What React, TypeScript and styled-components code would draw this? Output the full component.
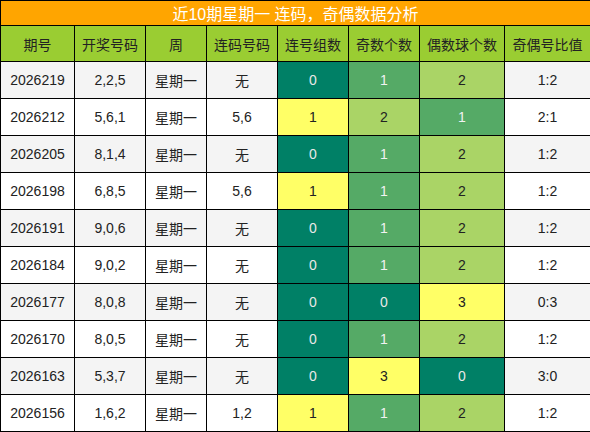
import React from "react";
import styled, { createGlobalStyle } from "styled-components";

const Global = createGlobalStyle`
  html, body { margin: 0; padding: 0; background: #fff; }
  body { font-family: "Liberation Sans", Arial, "Noto Sans CJK SC", sans-serif; }
`;

const Table = styled.table`
  width: 590px;
  border-collapse: collapse;
  table-layout: fixed;
  font-family: "Liberation Sans", Arial, "Noto Sans CJK SC", sans-serif;
`;

const TitleCell = styled.th`
  height: 24px;
  padding: 0;
  background: #ffa500;
  color: #fff;
  font-size: 16px;
  font-weight: normal;
  text-align: center;
  border: 1px solid #000;
`;

const HeadCell = styled.th`
  height: 35px;
  padding: 0;
  background: #9acd32;
  color: #222;
  font-size: 14px;
  font-weight: normal;
  text-align: center;
  border: 1px solid #000;
`;

type Tone = "dark" | "mid" | "light" | "yellow";

const toneBg: Record<Tone, string> = {
  dark: "#008066",
  mid: "#55aa66",
  light: "#aad466",
  yellow: "#ffff66",
};
const toneFg: Record<Tone, string> = {
  dark: "#e8e8e8",
  mid: "#f2f2f2",
  light: "#222",
  yellow: "#222",
};

const Row = styled.tr<{ $alt: boolean }>`
  background: ${(p) => (p.$alt ? "#f4f4f4" : "#fff")};
`;

const Cell = styled.td<{ $tone?: Tone }>`
  height: 36px;
  padding: 0;
  text-align: center;
  font-size: 14px;
  color: ${(p) => (p.$tone ? toneFg[p.$tone] : "#222")};
  background: ${(p) => (p.$tone ? toneBg[p.$tone] : "transparent")};
  border: 1px solid #000;
`;

const widths = [74, 71, 61, 71, 71, 71, 85, 86];
const heads = ["期号", "开奖号码", "周", "连码号码", "连号组数", "奇数个数", "偶数球个数", "奇偶号比值"];

type R = [string, string, string, number, number, number, string];
const rows: R[] = [
  ["2026219", "2,2,5", "无", 0, 1, 2, "1:2"],
  ["2026212", "5,6,1", "5,6", 1, 2, 1, "2:1"],
  ["2026205", "8,1,4", "无", 0, 1, 2, "1:2"],
  ["2026198", "6,8,5", "5,6", 1, 1, 2, "1:2"],
  ["2026191", "9,0,6", "无", 0, 1, 2, "1:2"],
  ["2026184", "9,0,2", "无", 0, 1, 2, "1:2"],
  ["2026177", "8,0,8", "无", 0, 0, 3, "0:3"],
  ["2026170", "8,0,5", "无", 0, 1, 2, "1:2"],
  ["2026163", "5,3,7", "无", 0, 3, 0, "3:0"],
  ["2026156", "1,6,2", "1,2", 1, 1, 2, "1:2"],
];

const countTone = (n: number): Tone => (["dark", "mid", "light", "yellow"] as Tone[])[n];
const linkTone = (n: number): Tone => (n === 0 ? "dark" : "yellow");

export default function App() {
  return (
    <>
      <Global />
      <Table>
        <colgroup>
          {widths.map((w, i) => (
            <col key={i} style={{ width: w }} />
          ))}
        </colgroup>
        <thead>
          <tr>
            <TitleCell colSpan={8}>近10期星期一 连码，奇偶数据分析</TitleCell>
          </tr>
          <tr>
            {heads.map((h) => (
              <HeadCell key={h}>{h}</HeadCell>
            ))}
          </tr>
        </thead>
        <tbody>
          {rows.map((r, i) => (
            <Row key={r[0]} $alt={i % 2 === 0}>
              <Cell>{r[0]}</Cell>
              <Cell>{r[1]}</Cell>
              <Cell>星期一</Cell>
              <Cell>{r[2]}</Cell>
              <Cell $tone={linkTone(r[3])}>{r[3]}</Cell>
              <Cell $tone={countTone(r[4])}>{r[4]}</Cell>
              <Cell $tone={countTone(r[5])}>{r[5]}</Cell>
              <Cell>{r[6]}</Cell>
            </Row>
          ))}
        </tbody>
      </Table>
    </>
  );
}
